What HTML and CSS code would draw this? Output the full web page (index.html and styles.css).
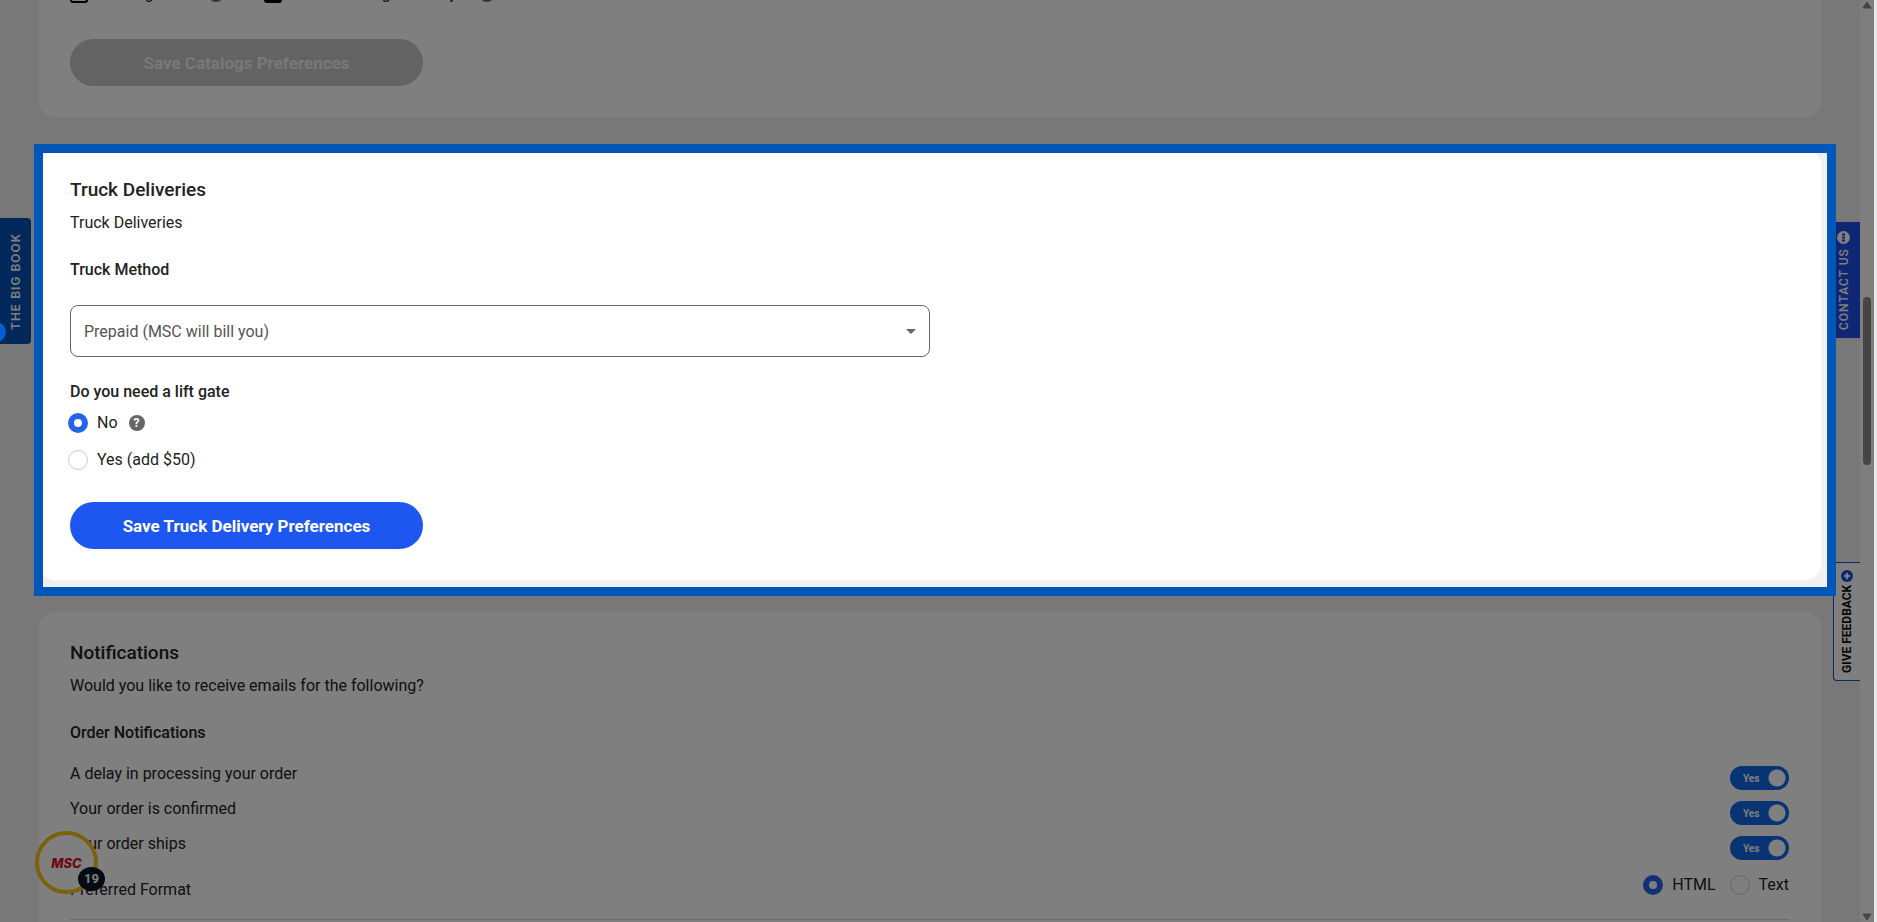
FILE: index.html
```html
<!DOCTYPE html>
<html lang="en">
<head>
    <meta charset="UTF-8">
    <meta name="viewport" content="width=device-width, initial-scale=1.0">
    <title>Account Preferences</title>
    <link rel="stylesheet" href="styles.css">
</head>
<body>
    <div class="viewport">
        <main class="content">
            <section class="card catalogs">
                <div class="catalog-list">
                    <label class="catalog"><input type="checkbox" class="checkbox"> The Big Book <span class="help">?</span></label>
                    <label class="catalog"><input type="checkbox" class="checkbox" checked> Metalworking Best Buys <span class="help">?</span></label>
                </div>
                <button type="button" class="btn" disabled>Save Catalogs Preferences</button>
            </section>

            <div class="spotlight">
                <section class="card">
                    <h2>Truck Deliveries</h2>
                    <p>Truck Deliveries</p>
                    <h3><label for="truckMethod">Truck Method</label></h3>
                    <div class="select-wrap">
                        <select id="truckMethod" class="select">
                            <option>Prepaid (MSC will bill you)</option>
                        </select>
                        <svg class="caret" width="10" height="5" viewBox="0 0 10 5"><path d="M0 0h10L5 5z" fill="#666"/></svg>
                    </div>
                    <fieldset class="lift-gate">
                        <legend>Do you need a lift gate</legend>
                        <div class="lift-options">
                            <label class="option"><input type="radio" class="radio" name="liftGate" checked> No <span class="help">?</span></label>
                            <label class="option"><input type="radio" class="radio" name="liftGate"> Yes (add $50)</label>
                        </div>
                    </fieldset>
                    <button type="button" class="btn">Save Truck Delivery Preferences</button>
                </section>
            </div>

            <section class="card">
                <h2>Notifications</h2>
                <p>Would you like to receive emails for the following?</p>
                <h3>Order Notifications</h3>
                <div class="notification">
                    <label for="orderDelay">A delay in processing your order</label>
                    <span class="toggle"><input type="checkbox" id="orderDelay" checked><span class="toggle-text">Yes</span></span>
                </div>
                <div class="notification">
                    <label for="orderConfirmed">Your order is confirmed</label>
                    <span class="toggle"><input type="checkbox" id="orderConfirmed" checked><span class="toggle-text">Yes</span></span>
                </div>
                <div class="notification">
                    <label for="orderShips">Your order ships</label>
                    <span class="toggle"><input type="checkbox" id="orderShips" checked><span class="toggle-text">Yes</span></span>
                </div>
                <div class="notification format">
                    <span>Preferred Format</span>
                    <div class="format-options">
                        <label class="option"><input type="radio" class="radio" name="format" checked> HTML</label>
                        <label class="option"><input type="radio" class="radio" name="format"> Text</label>
                    </div>
                </div>
            </section>
        </main>

        <div class="scrollbar">
            <svg width="10" height="8" viewBox="0 0 10 8"><path d="M5 1l4 6H1z" fill="#8a8a8a" stroke="#8a8a8a" stroke-linejoin="round"/></svg>
            <div class="scroll-thumb"></div>
            <svg width="10" height="8" viewBox="0 0 10 8"><path d="M5 7l4-6H1z" fill="#8a8a8a" stroke="#8a8a8a" stroke-linejoin="round"/></svg>
        </div>

        <a href="#" class="tab tab-book">THE BIG BOOK</a>
        <span class="beacon"></span>
        <button type="button" class="tab tab-contact">CONTACT US
            <svg width="13" height="13" viewBox="0 0 13 13"><circle cx="6.5" cy="6.5" r="6.5" fill="#fff"/><path d="M5 3.500h3M5 6.500h3M5 9.500h3" stroke="#1d3fe0" stroke-width="2"/></svg>
        </button>
        <button type="button" class="tab tab-feedback">GIVE FEEDBACK
            <svg width="12" height="12" viewBox="0 0 12 12"><circle cx="6" cy="6" r="6" fill="#1d4ed8"/><path d="M6 3v6M3 6h6" stroke="#fff" stroke-width="2"/></svg>
        </button>
        <button type="button" class="chat">MSC<span class="chat-count">19</span></button>
    </div>
</body>
</html>
```

FILE: styles.css
```css
* {
    box-sizing: border-box;
}
body {
    margin: 0;
    background-color: #e8e8e8;
    font-family: Roboto, Arial, sans-serif;
    font-size: 16px;
    line-height: 20px;
    color: #222;
}
.viewport {
    position: relative;
    display: flex;
    height: 100vh;
    margin-right: 3px;
    overflow: hidden;
    background-color: #f1f1f1;
}
.content {
    flex: 1;
    display: flex;
    flex-direction: column;
    gap: 32px;
    padding: 0 39px;
    margin-top: -16px;
}
.card {
    padding: 29px 32px 31px 31px;
    border-radius: 16px;
    background-color: white;
}
.catalogs {
    padding-top: 0;
}
.catalog-list {
    display: flex;
    gap: 40px;
    height: 20px;
    margin-bottom: 35px;
}
.catalog {
    display: flex;
    align-items: center;
    gap: 12px;
}
.checkbox {
    appearance: none;
    width: 18px;
    height: 18px;
    margin: 0;
    border: 2px solid #000;
    border-radius: 3px;
}
.checkbox:checked {
    background-color: #000;
}
h2 {
    margin: 0 0 11px;
    font-size: 19px;
    line-height: 24px;
    font-weight: 500;
}
p {
    margin: 0;
}
h3 {
    margin: 27px 0 21px;
    font-size: 16px;
    line-height: 20px;
    font-weight: 500;
}
.select-wrap {
    position: relative;
    width: 50%;
    margin-top: 25px;
}
.select {
    appearance: none;
    display: block;
    width: 100%;
    height: 52px;
    padding: 1px 13px 0;
    border: 1px solid #666;
    border-radius: 8px;
    background-color: white;
    font: inherit;
    color: #555;
}
.caret {
    position: absolute;
    right: 14px;
    top: 24px;
}
.lift-gate {
    margin: 25px 0 32px;
    padding: 0;
    border: 0;
}
.lift-gate legend {
    padding: 0;
    font-weight: 500;
}
.lift-options {
    display: flex;
    flex-direction: column;
    align-items: flex-start;
    gap: 17px;
    margin: 11px 0 0 -2px;
}
.option {
    display: flex;
    align-items: center;
    gap: 9px;
}
.radio {
    appearance: none;
    width: 20px;
    height: 20px;
    margin: 0;
    border: 1px solid #ccc;
    border-radius: 50%;
    background-color: white;
}
.radio:checked {
    border: 6px solid #2563eb;
}
.help {
    width: 16px;
    height: 16px;
    margin-left: 2px;
    border-radius: 50%;
    background-color: #666;
    color: white;
    font-size: 12px;
    line-height: 16px;
    font-weight: 700;
    text-align: center;
}
.btn {
    display: block;
    width: 353px;
    height: 47px;
    border: 0;
    border-radius: 24px;
    background-color: #1d57f0;
    color: white;
    font: 700 17px Roboto, Arial, sans-serif;
}
.btn:disabled {
    background-color: #c6c6c6;
    color: #f0f0f0;
}

/* Highlighted step, everything outside of it is dimmed */
.spotlight {
    position: relative;
}
.spotlight::after {
    content: "";
    position: absolute;
    inset: -5px -15px -16px -5px;
    z-index: 10;
    border: 9px solid #0057b8;
    box-shadow: 0 0 0 9999px rgba(0,0,0,0.5);
    pointer-events: none;
}

.notification {
    display: flex;
    justify-content: space-between;
    align-items: flex-start;
    height: 35px;
}
.toggle {
    position: relative;
    margin-top: 2px;
}
.toggle input {
    appearance: none;
    display: block;
    width: 59px;
    height: 24px;
    margin: 0;
    border-radius: 12px;
    background: radial-gradient(circle at 47px 12px, white 8px, #1268e8 9px);
}
.toggle-text {
    position: absolute;
    left: 13px;
    top: 3px;
    color: white;
    font-size: 10px;
    font-weight: 700;
    pointer-events: none;
}
.format {
    height: 51px;
    padding-top: 11px;
    border-bottom: 1px solid #d8d8d8;
}
.format-options {
    display: flex;
    gap: 14px;
    margin-top: -5px;
}

.scrollbar {
    display: flex;
    flex-direction: column;
    align-items: center;
    justify-content: space-between;
    width: 14px;
    padding: 1px 0;
    background-color: #fcfcfc;
}
.scroll-thumb {
    width: 8px;
    height: 168px;
    margin-bottom: 160px;
    border-radius: 4px;
    background-color: #8a8a8a;
}

/* Tabs pinned to the window edges */
.tab {
    position: absolute;
    display: flex;
    align-items: center;
    gap: 4px;
    padding: 0;
    border: 0;
    writing-mode: vertical-rl;
    font: 500 12px Roboto, Arial, sans-serif;
    text-decoration: none;
    rotate: 180deg;
}
.tab-book {
    left: 0;
    top: 218px;
    width: 31px;
    height: 126px;
    justify-content: center;
    border-radius: 4px 0 0 4px;
    background-color: #0050b4;
    color: white;
    font: 600 12px Inter, sans-serif;
    letter-spacing: 1px;
}
.beacon {
    position: absolute;
    left: -14px;
    top: 322px;
    z-index: 11;
    width: 20px;
    height: 20px;
    border-radius: 50%;
    background-color: #0060d0;
}
.tab-contact {
    right: 14px;
    top: 222px;
    width: 30px;
    height: 116px;
    padding: 8px 0 0 2px;
    background-color: #1d4ee8;
    color: white;
    letter-spacing: 1px;
}
.tab-feedback {
    right: 14px;
    top: 562px;
    width: 27px;
    height: 119px;
    padding-top: 7px;
    gap: 3px;
    border: 1px solid #1d4ed8;
    border-left: 0;
    border-radius: 0 4px 4px 0;
    background-color: white;
    color: #111;
    font-weight: 700;
}
.chat {
    position: absolute;
    left: 35px;
    top: 831px;
    width: 63px;
    height: 63px;
    padding: 0;
    border: 4px solid #f5c518;
    border-radius: 50%;
    background-color: white;
    color: #d8101c;
    font: italic 800 13px Inter, sans-serif;
}
.chat-count {
    position: absolute;
    right: -11px;
    bottom: -1px;
    width: 27px;
    height: 24px;
    border-radius: 50%;
    background-color: #0c1526;
    color: white;
    font: 700 13px/24px Roboto, Arial, sans-serif;
}
```
